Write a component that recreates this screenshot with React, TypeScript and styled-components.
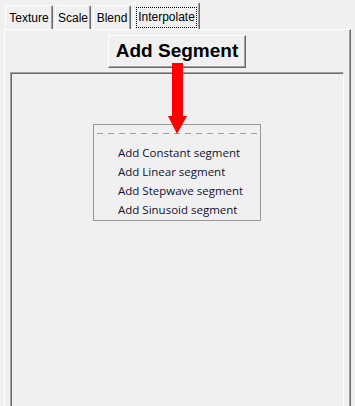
import React from "react";
import styled, { createGlobalStyle } from "styled-components";

const Global = createGlobalStyle`
  html, body { margin: 0; padding: 0; background: #f0f0f0; overflow: hidden; }
  #root { width: 355px; height: 406px; }
`;

const Root = styled.div`
  position: relative;
  width: 355px;
  height: 406px;
  box-sizing: border-box;
  padding: 2px 4px 0 4px;
  font-family: "Liberation Sans", Arial, sans-serif;
`;

const TabRow = styled.div`
  display: flex;
  align-items: flex-end;
  gap: 2px;
  height: 27px;
  padding-left: 1px;
`;

const Tab = styled.div<{ $w: number; $selected?: boolean }>`
  box-sizing: border-box;
  width: ${(p) => p.$w}px;
  height: ${(p) => (p.$selected ? 27 : 24)}px;
  display: flex;
  align-items: center;
  justify-content: center;
  border-top: 1px solid #ffffff;
  border-left: 1px solid #ffffff;
  border-right: 1px solid #696969;
  box-shadow: inset -1px 0 0 #a0a0a0;
  border-radius: 2px 2px 0 0;
  font-size: 12px;
  color: #000;
  padding-top: ${(p) => (p.$selected ? 2 : 1)}px;
`;

const FocusLabel = styled.span`
  outline: 1px dotted #000;
  outline-offset: 0;
  padding: 2px 1px 3px 1px;
  line-height: 14px;
`;

const Panel = styled.div`
  box-sizing: border-box;
  height: 380px;
  border-top: 1px solid #ffffff;
  border-left: 1px solid #ffffff;
  border-right: 1px solid #696969;
  box-shadow: inset -1px 0 0 #a0a0a0;
  display: flex;
  flex-direction: column;
  align-items: center;
  padding: 5px 6px 0 5px;
`;

const Button = styled.button`
  box-sizing: border-box;
  width: 138px;
  height: 33px;
  margin: 0;
  padding: 0 0 1px 0;
  background: #f0f0f0;
  border-top: 1px solid #ffffff;
  border-left: 1px solid #ffffff;
  border-right: 1px solid #696969;
  border-bottom: 1px solid #696969;
  box-shadow: inset -1px -1px 0 #a0a0a0;
  font-family: "Liberation Sans", Arial, sans-serif;
  font-weight: bold;
  font-size: 19px;
  color: #000;
`;

const ListFrame = styled.div`
  box-sizing: border-box;
  align-self: stretch;
  margin-top: 4px;
  flex: 1;
  border-top: 1px solid #a0a0a0;
  border-left: 1px solid #a0a0a0;
  border-right: 1px solid #ffffff;
  box-shadow: inset 1px 1px 0 #696969;
`;

const Menu = styled.div`
  position: absolute;
  left: 93px;
  top: 124px;
  width: 168px;
  height: 97px;
  box-sizing: border-box;
  border: 1px solid #979797;
  background: #f0f0f0;
  padding: 2px 2px 0 2px;
`;

const Separator = styled.svg`
  display: block;
  width: 162px;
  height: 11px;
  margin-bottom: 5px;
`;

const MenuItem = styled.div`
  font-family: "Open Sans", "Segoe UI", sans-serif;
  font-size: 11.5px;
  color: #101030;
  height: 19px;
  line-height: 19px;
  padding-left: 22px;
  white-space: nowrap;
`;

const Arrow = styled.svg`
  position: absolute;
  left: 166px;
  top: 62px;
  width: 24px;
  height: 74px;
`;

const tabs = [
  { label: "Texture", w: 48 },
  { label: "Scale", w: 36 },
  { label: "Blend", w: 38 },
  { label: "Interpolate", w: 67, selected: true },
];

const items = [
  "Add Constant segment",
  "Add Linear segment",
  "Add Stepwave segment",
  "Add Sinusoid segment",
];

export default function App() {
  return (
    <>
      <Global />
      <Root>
        <TabRow>
          {tabs.map((t) => (
            <Tab key={t.label} $w={t.w} $selected={t.selected}>
              {t.selected ? <FocusLabel>{t.label}</FocusLabel> : t.label}
            </Tab>
          ))}
        </TabRow>
        <Panel>
          <Button>Add Segment</Button>
          <ListFrame />
        </Panel>
        <Menu>
          <Separator viewBox="0 0 162 11">
            <line x1="1" y1="6.5" x2="162" y2="6.5" stroke="#a0a0a0" strokeWidth="1" strokeDasharray="6 5" />
          </Separator>
          {items.map((it) => (
            <MenuItem key={it}>{it}</MenuItem>
          ))}
        </Menu>
        <Arrow viewBox="0 0 24 74">
          <polygon points="6,1 17,1 17,54 21,54 11,72 2,54 6,54" fill="#ff0000" />
        </Arrow>
      </Root>
    </>
  );
}
